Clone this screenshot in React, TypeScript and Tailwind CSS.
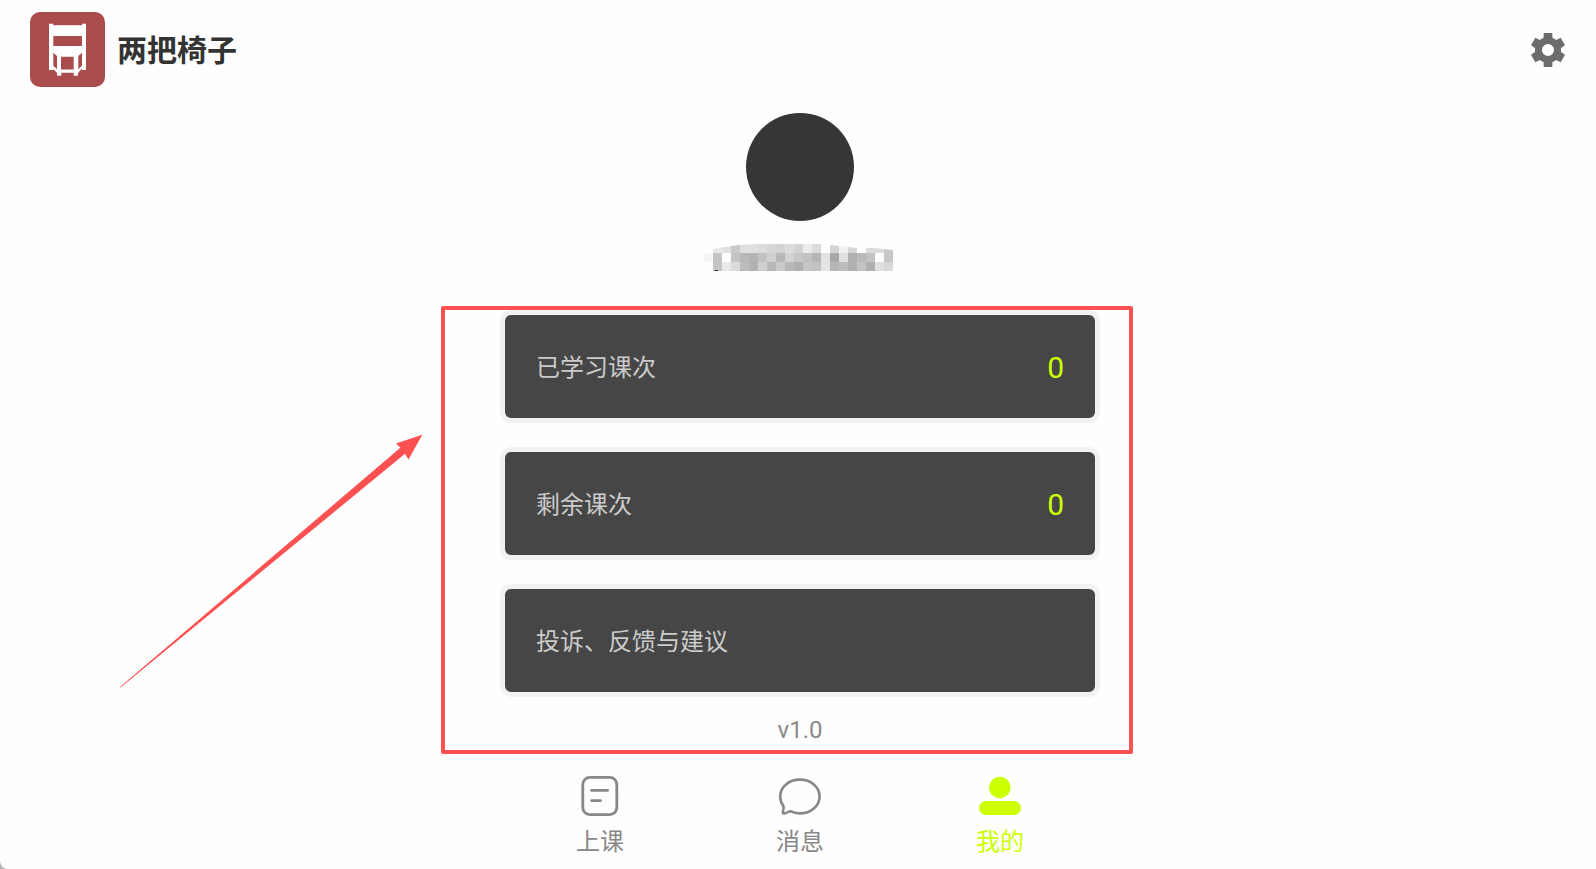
import { useState } from 'react';
import type { ReactNode } from 'react';

type TabKey = 'class' | 'message' | 'mine';

// grey levels of the masked user name, one array per row of 9px cells
const MASK_ROWS: string[][] = [
  ['', 'e8', 'e0', 'ca', 'e0', 'e0', 'dc', 'd6', 'd4', 'dc', 'd4', 'ec', 'dc', '', 'd4', 'f0', 'd6', '', 'dc', 'dc', 'c8'],
  ['f6', 'c5', '', 'c4', 'b8', 'b4', 'c2', 'd0', 'b8', 'd2', 'c8', 'c2', 'b6', 'e4', 'a8', 'e0', 'b0', 'ba', 'c4', '', 'c6'],
  ['', 'c4', 'e8', 'da', 'bc', 'b2', 'd0', 'b8', 'ca', 'b8', 'b0', 'c6', 'c2', 'e4', 'b6', 'bc', 'b0', 'c4', 'b0', 'e0', 'd8'],
];

function Logo() {
  return (
    <svg viewBox="0 0 75 75" className="h-[75px] w-[75px]" aria-hidden="true">
      <rect width="75" height="75" rx="10" fill="#a94c4b" />
      <path
        fill="#fff"
        fillRule="evenodd"
        d="M19 11.7H23.3V13.3H52V11.7H56V58H52V56.5L48 61V63.7H43.7V60.7H31.3V63.7H27V61L23.3 57V58H19Z
           M23.3 24V34H52V24Z
           M31 44.7V57.6H43.7V44.7Z
           M23.3 40.7V53.7L27 57.3V44Z
           M52 40.7V53.7L48.3 57.3V44Z"
      />
    </svg>
  );
}

function GearIcon() {
  return (
    <svg viewBox="-60 -60 120 120" className="h-10 w-10" fill="currentColor" aria-hidden="true">
      <path
        fillRule="evenodd"
        d="M-13 -51H13V-37L25 -30L38 -37L51 -14L39 -6V6L51 14L38 37L25 30L13 37V51H-13V37L-25 30L-38 37L-51 14L-39 6V-6L-51 -14L-38 -37L-25 -30L-13 -37Z
           M0 -18A18 18 0 1 0 0 18A18 18 0 1 0 0 -18Z"
      />
    </svg>
  );
}

function MaskedName() {
  return (
    <svg viewBox="0 0 192 28" className="mt-[23px] h-7 w-48" role="img" aria-label="用户名">
      <clipPath id="name-clip">
        <path d="M0 5H9L20 3L34 1L54 0H117L135 2L153 4L171 4L189 6V27H0Z" />
      </clipPath>
      <g clipPath="url(#name-clip)" shapeRendering="crispEdges">
        {MASK_ROWS.map((row, y) =>
          row.map((level, x) =>
            level ? (
              <rect key={`${x}-${y}`} x={x * 9} y={y * 9} width="9" height="9" fill={`#${level}${level}${level}`} />
            ) : null
          )
        )}
      </g>
      <rect x="11" y="26" width="3" height="1" fill="#222" />
    </svg>
  );
}

function ClassIcon() {
  return (
    <svg viewBox="0 0 44 44" className="h-11 w-11" fill="none" stroke="currentColor" strokeWidth="2.8" strokeLinecap="round" aria-hidden="true">
      <rect x="4.8" y="3.4" width="34" height="37.2" rx="7" />
      <path d="M13.6 16.4H29.6M13.6 26.6H22.6" />
    </svg>
  );
}

function MessageIcon() {
  return (
    <svg viewBox="0 0 44 44" className="h-11 w-11" fill="none" stroke="currentColor" strokeWidth="2.6" strokeLinejoin="round" aria-hidden="true">
      <path d="M21.8 5.6C32.8 5.6 41.6 12.8 41.6 22.4C41.6 32 32.8 39.4 21.8 39.4C18.2 39.4 15.4 38.7 12.4 37.2C10.4 37.4 8.6 39 6.6 39.5C5.2 39.8 4.6 38.9 4.9 37.8C5.5 35.6 6 33.8 5.4 32C3.2 29 2.2 25.9 2.2 22.4C2.2 12.8 11 5.6 21.8 5.6Z" />
    </svg>
  );
}

function MineIcon() {
  return (
    <svg viewBox="0 0 44 44" className="h-11 w-11" fill="currentColor" aria-hidden="true">
      <circle cx="21.8" cy="13.5" r="10.7" />
      <rect x="1" y="27" width="42" height="14" rx="7" />
    </svg>
  );
}

// pointer towards the highlighted area
function Arrow() {
  return (
    <svg viewBox="0 0 304 254" className="pointer-events-none absolute top-[434px] left-[119px] h-[254px] w-[304px]" aria-hidden="true">
      <path fill="#fd5151" d="M1 253L281.3 13.7L277 9.4L303.3 .7L289.5 25.4L286 19.8L1.6 253.4Z" />
    </svg>
  );
}

const TABS: { key: TabKey; label: string; icon: ReactNode }[] = [
  { key: 'class', label: '上课', icon: <ClassIcon /> },
  { key: 'message', label: '消息', icon: <MessageIcon /> },
  { key: 'mine', label: '我的', icon: <MineIcon /> },
];

const CARD =
  'flex h-[113px] w-full items-center justify-between rounded-[11px] border-[5px] border-[#f2f2f2] bg-[#464646] px-[31px] pt-0.5 text-2xl text-[#cbcbcb]';

function StatCard({ label, value }: { label: string; value: number }) {
  return (
    <div className={CARD}>
      <span>{label}</span>
      <span className="text-[30px] text-[#ccff00]">{value}</span>
    </div>
  );
}

export default function App() {
  const [activeTab, setActiveTab] = useState<TabKey>('mine');

  return (
    <div className="min-h-screen bg-[#b4b4b4] font-['Roboto','Noto_Sans_CJK_SC',sans-serif]">
      <div className="relative flex min-h-screen flex-col rounded-bl-lg bg-[#fefefe] pl-1">
        <header className="flex items-center justify-between py-3 pr-7 pl-[26px]">
          <div className="flex items-center gap-3">
            <Logo />
            <h1 className="pt-0.5 text-[30px] font-bold text-[#333]">两把椅子</h1>
          </div>
          <button type="button" aria-label="设置" className="text-[#6c6c6c]">
            <GearIcon />
          </button>
        </header>

        <main className="flex flex-col items-center pt-3.5">
          <div className="h-[108px] w-[108px] rounded-full bg-[#363636]" />
          <MaskedName />

          <section className="relative mt-[38px] w-full max-w-[600px]">
            <div className="flex flex-col gap-6">
              <StatCard label="已学习课次" value={0} />
              <StatCard label="剩余课次" value={0} />
              <button type="button" className={CARD}>
                投诉、反馈与建议
              </button>
            </div>
            <p className="mt-[17px] text-center text-2xl text-[#8a8a8a]">v1.0</p>
            <div className="pointer-events-none absolute -top-1 -right-[33px] -bottom-2 -left-[59px] rounded-xs border-4 border-[#fd5151]" />
          </section>
        </main>

        <nav className="mx-auto mt-auto flex w-full max-w-[600px] pb-[11px]">
          {TABS.map((tab) => (
            <button
              key={tab.key}
              type="button"
              onClick={() => setActiveTab(tab.key)}
              className={`flex flex-1 flex-col items-center gap-2 text-2xl ${
                activeTab === tab.key ? 'text-[#ccff00]' : 'text-[#888]'
              }`}
            >
              {tab.icon}
              <span>{tab.label}</span>
            </button>
          ))}
        </nav>

        <Arrow />
      </div>
    </div>
  );
}
